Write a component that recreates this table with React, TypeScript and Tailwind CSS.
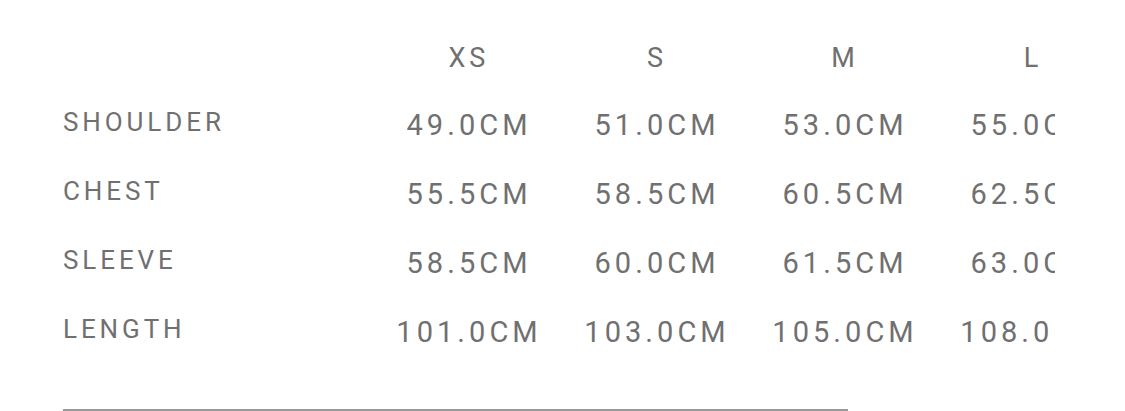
const SIZES = ['XS', 'S', 'M', 'L'];

const ROWS: { label: string; values: string[] }[] = [
  { label: 'SHOULDER', values: ['49.0CM', '51.0CM', '53.0CM', '55.0CM'] },
  { label: 'CHEST', values: ['55.5CM', '58.5CM', '60.5CM', '62.5CM'] },
  { label: 'SLEEVE', values: ['58.5CM', '60.0CM', '61.5CM', '63.0CM'] },
  { label: 'LENGTH', values: ['101.0CM', '103.0CM', '105.0CM', '108.0CM'] },
];

export default function App() {
  return (
    <div className="h-[411px] w-[1125px] overflow-hidden bg-white pl-[63px] pt-[23px] font-['Roboto','Liberation_Sans',sans-serif] text-[#707070]">
      {/* header */}
      <div className="flex h-[69px]">
        <div className="w-[310px] shrink-0" />
        <div className="flex w-[682px] overflow-hidden">
          {SIZES.map((s) => (
            <div key={s} className="w-[188px] shrink-0 text-center text-[27px] leading-[70px] tracking-[0.14em] indent-[0.14em]">
              {s}
            </div>
          ))}
        </div>
      </div>

      {ROWS.map((r) => (
        <div key={r.label} className="flex h-[69px]">
          <div className="w-[310px] shrink-0 text-[26px] leading-[61px] tracking-[0.15em]">{r.label}</div>
          <div className="flex w-[682px] overflow-hidden">
            {r.values.map((v, i) => (
              <div key={i} className="w-[188px] shrink-0 whitespace-nowrap text-center text-[29px] leading-[67px] tracking-[0.14em] indent-[0.14em]">
                {v}
              </div>
            ))}
          </div>
        </div>
      ))}

      <div className="mt-[41px] h-[2px] w-[785px] bg-[#999999]" />
    </div>
  );
}
